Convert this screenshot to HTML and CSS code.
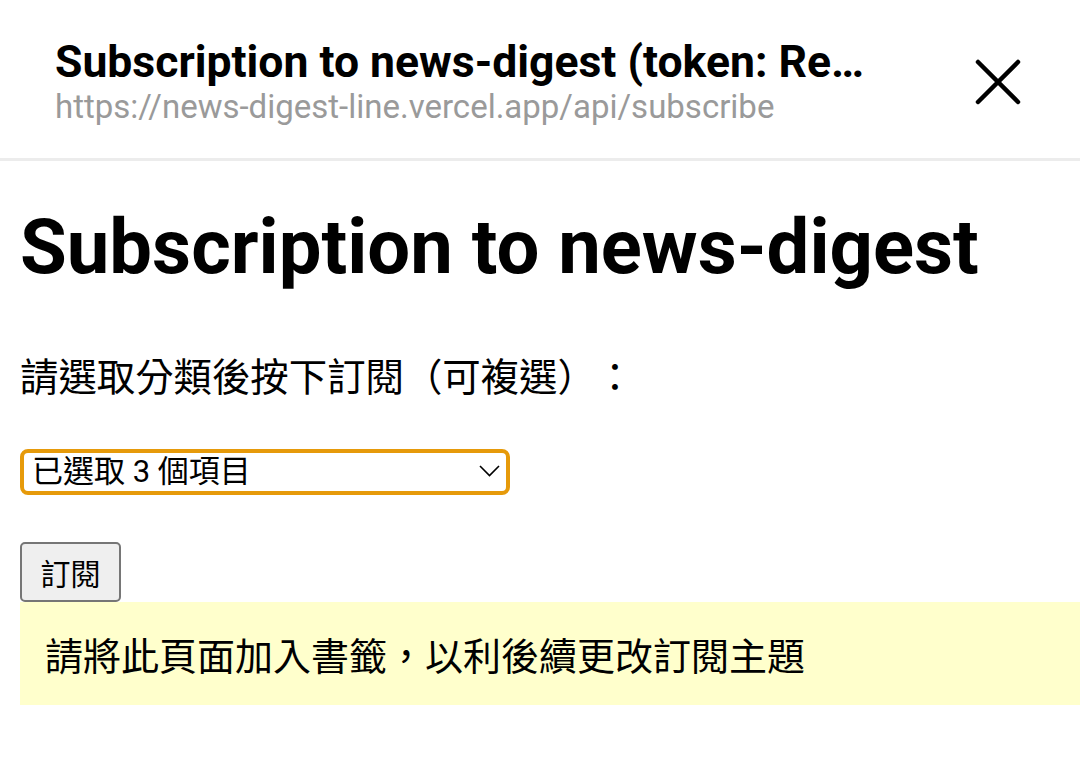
FILE: index.html
```html
<!DOCTYPE html>
<html lang="zh-Hant">
<head>
<meta charset="utf-8">
<link rel="stylesheet" href="styles.css">
</head>
<body>
<header class="topbar">
  <div class="topbar-text">
    <div class="topbar-title">Subscription to news-digest (token: Re…</div>
    <div class="topbar-url">https://news-digest-line.vercel.app/api/subscribe</div>
  </div>
  <button class="close" aria-label="close">
    <svg width="48" height="48" viewBox="0 0 48 48"><path d="M4 4 L44 44 M44 4 L4 44" stroke="#000" stroke-width="4.5" stroke-linecap="round" fill="none"/></svg>
  </button>
</header>
<main class="page">
  <h1 class="title">Subscription to news-digest</h1>
  <p class="lead">請選取分類後按下訂閱（可複選）：</p>
  <div class="select-wrap">
    <div class="select">已選取 3 個項目</div>
    <svg class="chev" width="21" height="12" viewBox="0 0 21 12"><path d="M1 1 L10.5 10.5 L20 1" stroke="#000" stroke-width="1.6" fill="none"/></svg>
  </div>
  <button class="btn">訂閱</button>
  <div class="notice">請將此頁面加入書籤，以利後續更改訂閱主題</div>
</main>
</body>
</html>
```
FILE: styles.css
```css
html, body {
  margin: 0;
  padding: 0;
  background: #fff;
  width: 1080px;
  overflow: hidden;
}
body {
  font-family: Roboto, "Noto Sans CJK TC", sans-serif;
  color: #000;
  text-spacing-trim: space-all;
}
.topbar {
  height: 158px;
  border-bottom: 3px solid #ececec;
  display: flex;
  align-items: flex-start;
  padding: 0 58px 0 55px;
}
.topbar-text {
  flex: 1;
  min-width: 0;
  display: flex;
  flex-direction: column;
  padding-top: 37px;
}
.topbar-title {
  font-weight: 700;
  font-size: 44.5px;
  line-height: 50px;
  white-space: nowrap;
}
.topbar-url {
  font-size: 33px;
  line-height: 40px;
  color: #9a9a9a;
  white-space: nowrap;
}
.close {
  border: 0;
  background: none;
  padding: 0;
  width: 48px;
  height: 48px;
  display: flex;
  margin-top: 58px;
}
.page {
  padding: 0 0 0 20px;
}
.title {
  font-family: Roboto, sans-serif;
  font-weight: 700;
  font-size: 76px;
  line-height: 90px;
  margin: 41px 0 0;
}
.lead {
  font-family: "Noto Sans CJK TC", sans-serif;
  font-size: 38.4px;
  line-height: 50px;
  margin: 57px 0 0;
}
.select-wrap {
  position: relative;
  width: 490px;
  margin-top: 50px;
}
.select {
  box-sizing: border-box;
  height: 46px;
  border: 4px solid #e69a0a;
  border-radius: 8px;
  font-family: Roboto, "Noto Sans CJK TC", sans-serif;
  font-size: 31px;
  line-height: 38px;
  padding: 0 8px;
}
.chev {
  position: absolute;
  right: 10px;
  top: 16px;
}
.btn {
  display: block;
  font-family: "Noto Sans CJK TC", sans-serif;
  font-size: 30px;
  background: #efefef;
  border: 2px solid #767676;
  border-radius: 5px;
  width: 101px;
  height: 60px;
  padding: 0;
  margin-top: 47px;
}
.notice {
  font-family: "Noto Sans CJK TC", sans-serif;
  background: #ffffcc;
  font-size: 38px;
  height: 103px;
  display: flex;
  align-items: center;
  padding-left: 25px;
}
```
